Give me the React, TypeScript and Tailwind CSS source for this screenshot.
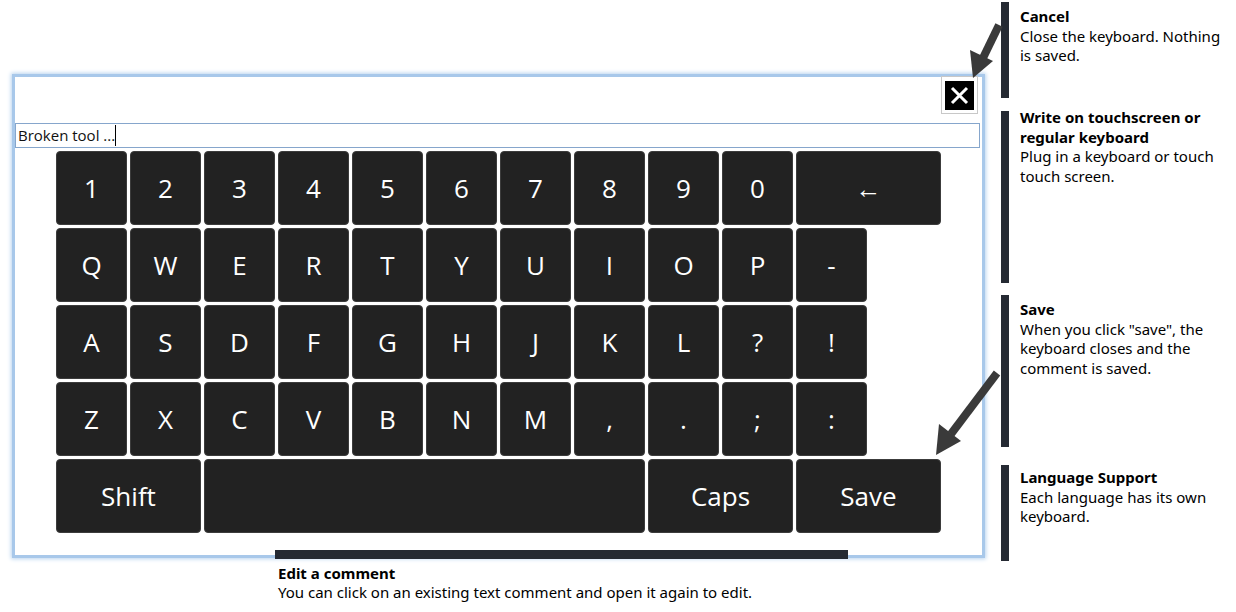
import React from 'react'

type Key = { label: string; span?: number }

const rows: Key[][] = [
  [
    { label: '1' }, { label: '2' }, { label: '3' }, { label: '4' }, { label: '5' },
    { label: '6' }, { label: '7' }, { label: '8' }, { label: '9' }, { label: '0' },
    { label: '←', span: 2 },
  ],
  [
    { label: 'Q' }, { label: 'W' }, { label: 'E' }, { label: 'R' }, { label: 'T' },
    { label: 'Y' }, { label: 'U' }, { label: 'I' }, { label: 'O' }, { label: 'P' },
    { label: '-' },
  ],
  [
    { label: 'A' }, { label: 'S' }, { label: 'D' }, { label: 'F' }, { label: 'G' },
    { label: 'H' }, { label: 'J' }, { label: 'K' }, { label: 'L' }, { label: '?' },
    { label: '!' },
  ],
  [
    { label: 'Z' }, { label: 'X' }, { label: 'C' }, { label: 'V' }, { label: 'B' },
    { label: 'N' }, { label: 'M' }, { label: ',' }, { label: '.' }, { label: ';' },
    { label: ':' },
  ],
  [
    { label: 'Shift', span: 2 },
    { label: '', span: 6 },
    { label: 'Caps', span: 2 },
    { label: 'Save', span: 2 },
  ],
]

// 71px keys, 3px gaps
const widthClass: Record<number, string> = {
  1: 'w-[71px]',
  2: 'w-[145px]',
  6: 'w-[441px]',
}

const notes = [
  {
    title: 'Cancel',
    text: 'Close the keyboard. Nothing is saved.',
    box: 'h-[96px] mt-[2px]',
    pad: 'pt-[5px]',
  },
  {
    title: 'Write on touchscreen or regular keyboard',
    text: 'Plug in a keyboard or touch touch screen.',
    box: 'h-[172px] mt-[13px]',
    pad: '-mt-[3px]',
  },
  {
    title: 'Save',
    text: 'When you click "save", the keyboard closes and the comment is saved.',
    box: 'h-[152px] mt-[12px]',
    pad: 'pt-[5px]',
  },
  {
    title: 'Language Support',
    text: 'Each language has its own keyboard.',
    box: 'h-[96px] mt-[18px]',
    pad: 'pt-[3px]',
  },
]

export default function App() {
  return (
    <div
      className="relative w-[1236px] h-[612px] bg-white flex overflow-hidden"
      style={{ fontFamily: '"Noto Sans", "Open Sans", sans-serif' }}
    >
      {/* left: keyboard window */}
      <div className="w-[1001px] pt-[74px] pl-[12px] flex flex-col">
        <div className="w-[973px] h-[484px] border-[3px] border-[#a8c8ea] shadow-[0_0_4px_1px_#b9d4ef] bg-white flex flex-col">
          <div className="h-[46px] flex justify-end items-start pr-[4px]">
            <div className="mt-[-1px] w-[37px] h-[38px] border border-[#c8c8c8] bg-white flex items-center justify-center">
              <div className="w-[29px] h-[29px] bg-black flex items-center justify-center">
                <svg width="19" height="19" viewBox="0 0 19 19">
                  <path d="M2 2 L17 17 M17 2 L2 17" stroke="white" strokeWidth="3" />
                </svg>
              </div>
            </div>
          </div>

          <div className="mr-[2px] h-[25px] border border-[#86a6cc] flex items-center pl-[2px] text-[15px] text-[#111]">
            <span style={{ fontFamily: '"Open Sans", sans-serif' }}>Broken tool ...</span>
            <span className="w-px h-[21px] bg-black" />
          </div>

          <div className="ml-[41px] mt-[3px] flex flex-col gap-[3px]">
            {rows.map((row, ri) => (
              <div key={ri} className="flex gap-[3px]">
                {row.map((k, ki) => (
                  <div
                    key={ki}
                    className={`${widthClass[k.span ?? 1]} h-[74px] rounded-[4px] bg-[#222222] border border-[#3c3c3c] flex items-center justify-center text-white text-[26px]`}
                    style={{ fontFamily: '"Open Sans", "Noto Sans", sans-serif' }}
                  >
                    {k.label}
                  </div>
                ))}
              </div>
            ))}
          </div>
        </div>

        <div className="relative z-10 ml-[263px] mt-[-8px] w-[573px] h-[9px] bg-[#252a33]" />
        <div className="ml-[266px] mt-[5px] text-[15px] leading-[19px] text-black">
          <div className="font-bold">Edit a comment</div>
          <div>You can click on an existing text comment and open it again to edit.</div>
        </div>
      </div>

      {/* right: notes */}
      <div className="flex flex-col">
        {notes.map(n => (
          <div key={n.title} className={`flex ${n.box}`}>
            <div className="w-[8px] h-full bg-[#252a33]" />
            <div className={`pl-[11px] ${n.pad} w-[215px] text-[15px] leading-[19.5px] text-black`}>
              <div className="font-bold">{n.title}</div>
              <div>{n.text}</div>
            </div>
          </div>
        ))}
      </div>

      {/* arrows */}
      <svg className="absolute inset-0 pointer-events-none" width="1236" height="612">
        <line x1="999" y1="25" x2="983" y2="58" stroke="#3a3a3a" strokeWidth="8" />
        <polygon points="973,78 970,50 993,61" fill="#3a3a3a" />
        <line x1="997" y1="373" x2="951" y2="434" stroke="#3a3a3a" strokeWidth="8" />
        <polygon points="936,455 939,424 961,441" fill="#3a3a3a" />
      </svg>
    </div>
  )
}
